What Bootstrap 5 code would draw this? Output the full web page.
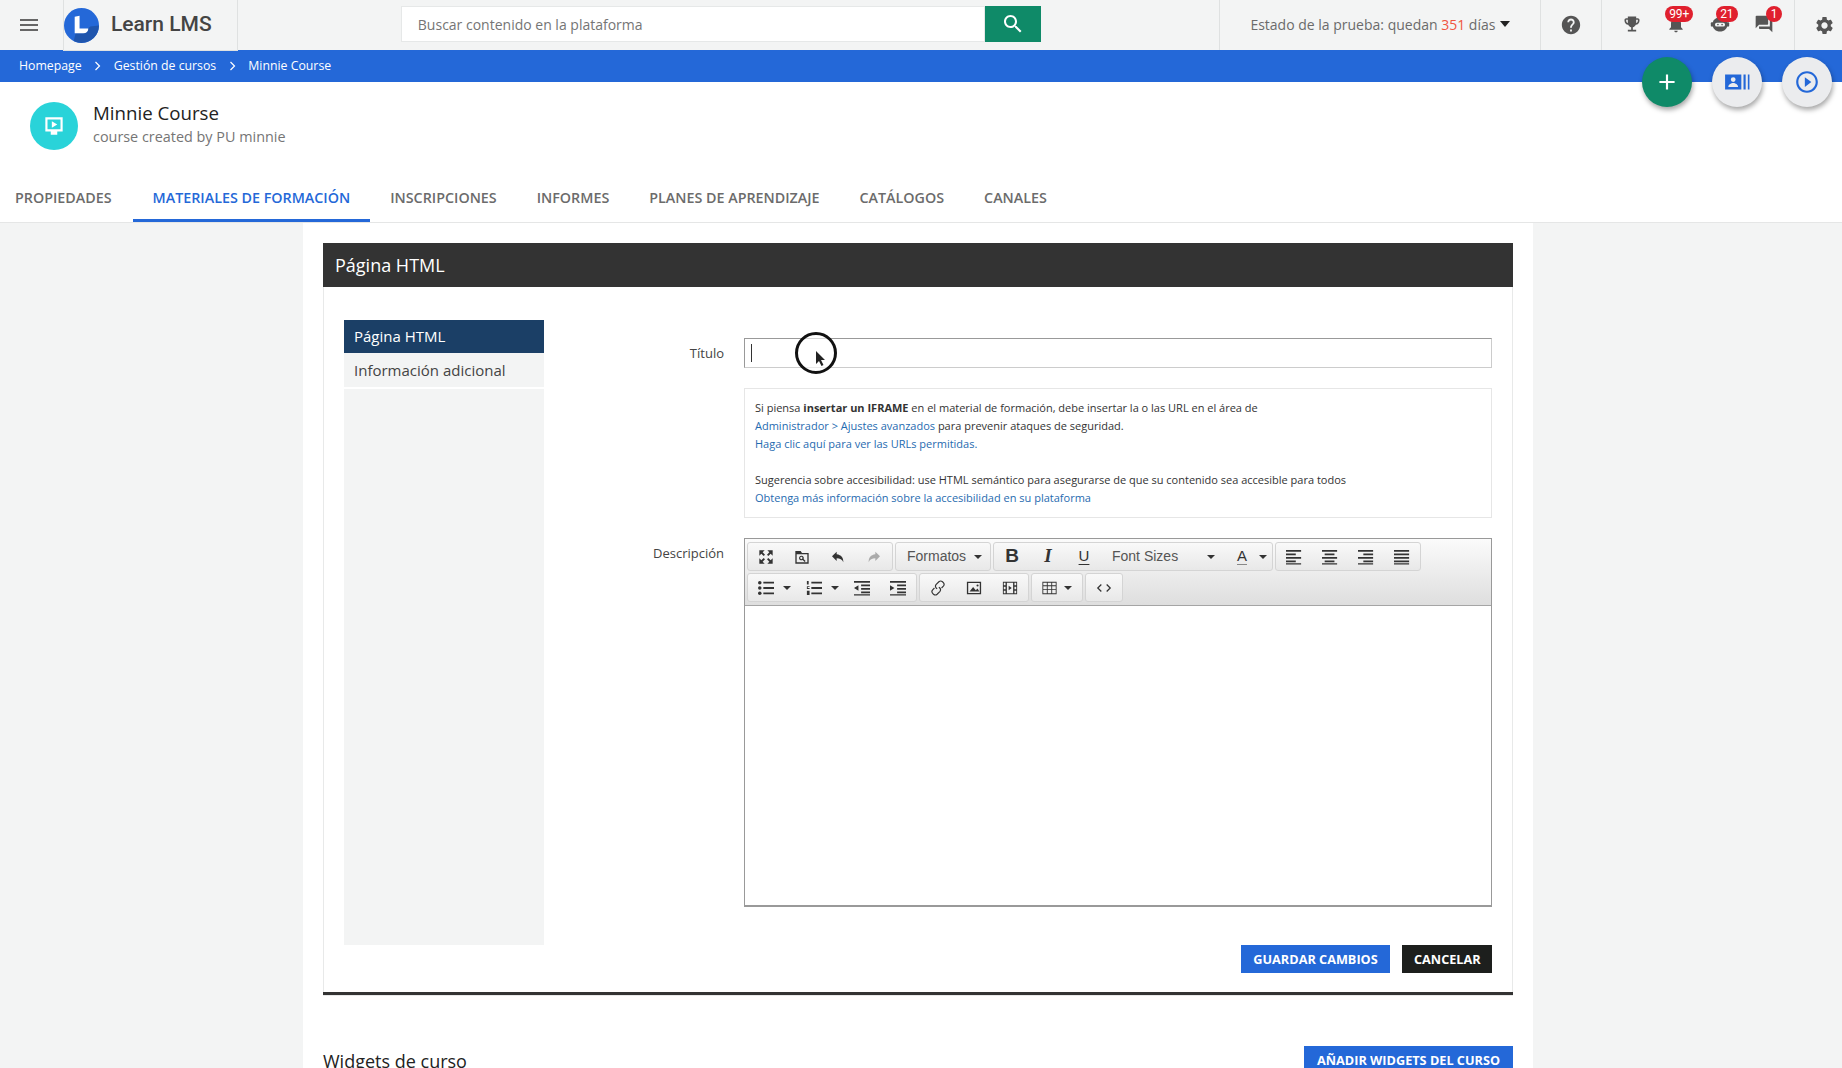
<!DOCTYPE html>
<html lang="es">
<head>
  <meta charset="UTF-8" />
  <title>Minnie Course</title>
  <link rel="stylesheet" href="https://cdn.jsdelivr.net/npm/bootstrap@5.3.2/dist/css/bootstrap.min.css" />
  <style>
    body { font-family: "Open Sans", sans-serif; color: #333; background: #fff; height: 1068px; overflow: hidden; position: relative; }
    a { text-decoration: none; }
    .topbar { height: 50px; background: #f3f4f4; }
    .menu-btn { width: 63px; padding-right: 4px; }
    .menu-btn svg { width: 24px; height: 24px; fill: #666; }
    .logo-box { width: 175px; height: 51px; background: #f3f4f4; border: 1px solid #dfe1e1; border-top: 0; position: relative; z-index: 2; font-family: "Roboto", sans-serif; font-size: 21px; font-weight: 500; color: #444; gap: 12px; }
    .search-wrap { margin-left: 163px; width: 641px; height: 36px; margin-top: -2px; }
    .search-wrap .form-control { border: 1px solid #e6e8e8; border-radius: 0; font-size: 14px; height: 36px; padding-left: 16px; }
    .search-wrap .form-control::placeholder { color: #757575; }
    .search-btn { width: 56px; height: 36px; background: #0f8a68; border-radius: 0; padding: 0; }
    .search-btn svg { width: 24px; height: 24px; fill: #fff; }
    .top-cell { height: 50px; border-left: 1px solid #dfe1e1; }
    .trial { margin-left: 178px; width: 321px; font-size: 14px; color: #6b6b6b; padding-left: 30px; padding-bottom: 2px; }
    .trial .num { color: #f0553f; }
    .caret-down { width: 0; height: 0; border-left: 5px solid transparent; border-right: 5px solid transparent; border-top: 6px solid #222; margin-left: 5px; }
    .help-cell { width: 61px; }
    .icons-cell { width: 193px; padding-left: 8px; }
    .gear-cell { width: 48px; padding-left: 19px; }
    .ico { fill: #555; width: 20px; height: 20px; }
    .help-cell .ico { width: 22px; height: 22px; }
    .gear-cell .ico { width: 21px; height: 21px; }
    .ico-wrap { position: relative; width: 44px; height: 20px; display: flex; justify-content: center; margin-top: -2px; }
    .count { position: absolute; top: -8px; left: 50%; background: #e0202e; color: #fff; font-size: 12px; line-height: 16px; height: 16px; border-radius: 8px; padding: 0 4px; text-align: center; font-family: "Roboto", sans-serif; }
    .crumbs { height: 32px; background: #2468d8; color: #fff; font-size: 12.3px; padding-left: 19px; gap: 12.5px; }
    .crumbs svg { width: 7px; height: 10px; stroke: #fff; fill: none; stroke-width: 1.2; }
    .fabs { position: absolute; top: 57px; left: 1642px; gap: 20px; z-index: 3; }
    .fab { width: 50px; height: 50px; border-radius: 50%; background: #ebecee; box-shadow: 1px 3px 5px rgba(0,0,0,.35); }
    .fab svg { width: 26px; height: 26px; fill: #2468d8; }
    .fab.green { background: #0f8a68; }
    .fab.green svg { fill: #fff; }
    .course-head { height: 108px; padding: 20px 0 0 30px; gap: 15px; }
    .course-ico { width: 48px; height: 48px; border-radius: 50%; background: #29d3d9; }
    .course-ico svg { width: 26px; height: 26px; fill: #fff; }
    .course-name { font-size: 18.7px; line-height: 25px; margin-top: -2px; margin-bottom: 1px; color: #222; }
    .course-sub { font-size: 14.4px; color: #757575; line-height: 22px; }
    .tabs { height: 32px; border-bottom: 1px solid #e5e6e6; box-sizing: content-box; }
    .tabs a { display: block; padding: 0 20px; height: 32px; font-size: 14.3px; font-weight: 600; color: #6b6b6b; line-height: 16px; }
    .tabs a:first-child { padding-left: 15px; margin-right: 1px; }
    .tabs a.active { color: #2468d8; border-bottom: 3px solid #2468d8; }
    .main { background: #f3f4f4; }
    .sheet { margin-left: 303px; width: 1230px; height: 846px; background: #fff; padding: 20px 20px 0; }
    .panel-title { height: 44px; background: #333; color: #fff; font-size: 18px; padding-left: 12px; }
    .panel { border: 1px solid #e8e9e9; border-top: 0; height: 709px; padding: 33px 20px 0; position: relative; }
    .panel::after { content: ""; position: absolute; left: -1px; right: -1px; bottom: 0; height: 3px; background: #333; }
    .side { width: 200px; height: 625px; background: #f3f4f4; flex: none; }
    .side div { height: 33px; padding-left: 10px; font-size: 15px; color: #444; }
    .side .on { background: #1b3f66; color: #fff; }
    .side .next { height: 36px; border-bottom: 2px solid #fff; }
    .form-area { width: 948px; flex: none; }
    .lab { width: 200px; padding-right: 20px; text-align: right; font-size: 13px; color: #444; flex: none; }
    .title-row { margin-top: 18px; }
    .title-row .lab { padding-top: 1px; }
    .title-input { width: 748px; height: 30px; border: 1px solid #ccc; border-top-color: #999; border-left-color: #999; position: relative; }
    .txt-caret { position: absolute; left: 6px; top: 5px; width: 1px; height: 18px; background: #333; }
    .pointer-ring { position: absolute; left: 50px; top: -7px; width: 42px; height: 42px; border: 3px solid #111; border-radius: 50%; background: rgba(255,255,255,.6); }
    .pointer-ring svg { position: absolute; left: 17px; top: 15px; width: 12px; height: 17px; }
    .info { width: 748px; height: 130px; border: 1px solid #e6e6e6; margin: 20px 0 0 200px; padding: 10px 10px 0; font-size: 11px; line-height: 18px; color: #333; }
    .info a { color: #1f6bb0; }
    .editor-row { margin-top: 20px; }
    .editor-row .lab { padding-top: 6px; }
    .editor { width: 748px; height: 369px; border: 1px solid #999; border-bottom-width: 2px; flex: none; font-family: "Liberation Sans", sans-serif; }
    .tb { height: 67px; border-bottom: 1px solid #a5a5a5; background: linear-gradient(#fbfbfb, #ededed 48%, #ececec 52%, #dedede); padding: 3px 2px 0; }
    .tb-row { height: 31px; gap: 2px; }
    .grp { height: 29px; border: 1px solid #d4d4d4; border-radius: 3px; background: linear-gradient(#f9f9f9, #e8e8e8); }
    .b { width: 36px; height: 27px; flex: none; }
    .b svg { width: 16px; height: 16px; fill: #333; }
    .b.off svg { fill: #aaa; }
    .drop { width: 48px; height: 27px; padding-left: 9px; flex: none; }
    .w { font-size: 14px; color: #555; }
    .tcaret { width: 0; height: 0; border-left: 4px solid transparent; border-right: 4px solid transparent; border-top: 4px solid #333; flex: none; }
    .actions { gap: 12px; margin-top: 38px; margin-left: 0; height: 28px; }
    .btn-save, .btn-cancel, .btn-add { border: 0; border-radius: 0; color: #fff; font-weight: 700; font-size: 12.7px; padding: 1px 12px 0; height: 28px; white-space: nowrap; }
    .btn-save { width: 149px; }
    .btn-cancel { width: 90px; background: #1d1f1d; }
    .btn-save, .btn-add { background: #2468d8; }
    .btn-add { width: 209px; }
    .widgets { margin-top: 50px; }
    .widgets h5 { font-size: 18px; line-height: 14px; font-weight: 400; color: #222; margin: 8px 0 0; }
  </style>
</head>
<body>

  <div class="topbar d-flex align-items-center">
    <div class="menu-btn d-flex justify-content-center"><svg viewBox="0 0 24 24"><path d="M3 18h18v-2H3v2zm0-5h18v-2H3v2zm0-7v2h18V6H3z"/></svg></div>
    <div class="logo-box d-flex align-items-center align-self-start">
      <svg width="35" height="35" viewBox="0 0 36 36"><circle cx="18" cy="18" r="18" fill="#2468d8"/><path d="M36 18a18 18 0 0 1-26 16L12 26h8l7-7z" fill="#1f55ad"/><path d="M11 9l5-1v13h9c0 3-2 5-5 5h-9z" fill="#fff"/></svg>
      <span>Learn LMS</span>
    </div>
    <div class="search-wrap d-flex">
      <input class="form-control" type="text" placeholder="Buscar contenido en la plataforma" />
      <button class="btn search-btn d-flex align-items-center justify-content-center flex-shrink-0"><svg viewBox="0 0 24 24"><path d="M15.5 14h-.79l-.28-.27C15.41 12.59 16 11.11 16 9.5 16 5.91 13.09 3 9.5 3S3 5.91 3 9.5 5.91 16 9.5 16c1.61 0 3.09-.59 4.23-1.57l.27.28v.79l5 4.99L20.49 19l-4.99-5zm-6 0C7.01 14 5 11.99 5 9.5S7.01 5 9.5 5 14 7.01 14 9.5 11.99 14 9.5 14z"/></svg></button>
    </div>
    <div class="top-cell trial d-flex align-items-center">Estado de la prueba: quedan&nbsp;<span class="num">351</span>&nbsp;días<span class="caret-down"></span></div>
    <div class="top-cell help-cell d-flex align-items-center justify-content-center"><svg class="ico" viewBox="0 0 24 24"><path d="M12 2C6.48 2 2 6.48 2 12s4.48 10 10 10 10-4.48 10-10S17.52 2 12 2zm1 17h-2v-2h2v2zm2.07-7.75l-.9.92C13.45 12.9 13 13.5 13 15h-2v-.5c0-1.1.45-2.1 1.17-2.83l1.24-1.26c.37-.36.59-.86.59-1.41 0-1.1-.9-2-2-2s-2 .9-2 2H8c0-2.21 1.79-4 4-4s4 1.79 4 4c0 .88-.36 1.68-.93 2.25z"/></svg></div>
    <div class="top-cell icons-cell d-flex align-items-center">
      <div class="ico-wrap"><svg class="ico" viewBox="0 0 24 24"><path d="M19 5h-2V3H7v2H5c-1.1 0-2 .9-2 2v1c0 2.55 1.92 4.63 4.39 4.94.63 1.5 1.98 2.63 3.61 2.96V19H7v2h10v-2h-4v-3.1c1.63-.33 2.98-1.46 3.61-2.96C19.08 12.63 21 10.55 21 8V7c0-1.1-.9-2-2-2zM5 8V7h2v3.82C5.84 10.4 5 9.3 5 8zm14 0c0 1.3-.84 2.4-2 2.82V7h2v1z"/></svg></div>
      <div class="ico-wrap"><svg class="ico" viewBox="0 0 24 24"><path d="M12 22c1.1 0 2-.9 2-2h-4c0 1.1.89 2 2 2zm6-6v-5c0-3.07-1.64-5.64-4.5-6.32V4c0-.83-.67-1.5-1.5-1.5s-1.5.67-1.5 1.5v.68C7.63 5.36 6 7.92 6 11v5l-2 2v1h16v-1l-2-2z"/></svg><span class="count" style="margin-left:-11px">99+</span></div>
      <div class="ico-wrap"><svg class="ico" viewBox="0 0 24 24"><path d="M12 4C7 4 3 7.500 3 12.500S7 21 12 21s9-3.500 9-8.500S17 4 12 4z"/><rect x="1" y="10" width="3" height="5" rx="1"/><rect x="20" y="10" width="3" height="5" rx="1"/><rect x="6" y="10.500" width="12" height="4.500" rx="2.200" fill="#f3f4f4"/><circle cx="9.500" cy="12.700" r="1" fill="#555"/><circle cx="14.500" cy="12.700" r="1" fill="#555"/></svg><span class="count" style="margin-left:-4px">21</span></div>
      <div class="ico-wrap"><svg class="ico" viewBox="0 0 24 24"><path d="M21 6h-2v9H6v2c0 .55.45 1 1 1h11l4 4V7c0-.55-.45-1-1-1zm-4 6V3c0-.55-.45-1-1-1H3c-.55 0-1 .45-1 1v14l4-4h10c.55 0 1-.45 1-1z"/></svg><span class="count px-0" style="margin-left:2px;width:16px">1</span></div>
    </div>
    <div class="top-cell gear-cell d-flex align-items-center"><svg class="ico" viewBox="0 0 24 24"><path d="M19.14 12.94c.04-.3.06-.61.06-.94 0-.32-.02-.64-.07-.94l2.03-1.58c.18-.14.23-.41.12-.61l-1.92-3.32c-.12-.22-.37-.29-.59-.22l-2.39.96c-.5-.38-1.03-.7-1.62-.94l-.36-2.54c-.04-.24-.24-.41-.48-.41h-3.84c-.24 0-.43.17-.47.41l-.36 2.54c-.59.24-1.13.57-1.62.94l-2.39-.96c-.22-.08-.47 0-.59.22L2.74 8.87c-.12.21-.08.47.12.61l2.03 1.58c-.05.3-.09.63-.09.94s.02.64.07.94l-2.03 1.58c-.18.14-.23.41-.12.61l1.92 3.32c.12.22.37.29.59.22l2.39-.96c.5.38 1.03.7 1.62.94l.36 2.54c.05.24.24.41.48.41h3.84c.24 0 .44-.17.47-.41l.36-2.54c.59-.24 1.13-.56 1.62-.94l2.39.96c.22.08.47 0 .59-.22l1.92-3.32c.12-.22.07-.47-.12-.61l-2.01-1.58zM12 15.6c-1.98 0-3.6-1.62-3.6-3.6s1.62-3.6 3.6-3.6 3.6 1.62 3.6 3.6-1.62 3.6-3.6 3.6z"/></svg></div>
  </div>

  <div class="crumbs d-flex align-items-center">
    <span>Homepage</span><svg viewBox="0 0 7 10"><path d="M1.500 1l4 4-4 4"/></svg>
    <span>Gestión de cursos</span><svg viewBox="0 0 7 10"><path d="M1.500 1l4 4-4 4"/></svg>
    <span>Minnie Course</span>
  </div>

  <div class="fabs d-flex">
    <div class="fab green d-flex align-items-center justify-content-center"><svg viewBox="0 0 24 24"><path d="M19 13h-6v6h-2v-6H5v-2h6V5h2v6h6v2z"/></svg></div>
    <div class="fab d-flex align-items-center justify-content-center"><svg viewBox="0 0 24 24"><path d="M1 5h15v14H1zM8.500 7.500a2.200 2.200 0 1 0 0 4.400 2.200 2.200 0 0 0 0-4.400zM4 16.500h9c0-2-2.500-3.500-4.500-3.500S4 14.500 4 16.500zM18 5h2v14h-2zM22 5h1.500v14H22z" fill-rule="evenodd"/></svg></div>
    <div class="fab d-flex align-items-center justify-content-center"><svg viewBox="0 0 24 24"><path d="M10 16.500l6-4.500-6-4.500v9zM12 2C6.480 2 2 6.480 2 12s4.480 10 10 10 10-4.480 10-10S17.520 2 12 2zm0 18c-4.410 0-8-3.590-8-8s3.590-8 8-8 8 3.590 8 8-3.590 8-8 8z"/></svg></div>
  </div>

  <div class="course-head d-flex">
    <div class="course-ico d-flex align-items-center justify-content-center"><svg viewBox="0 0 24 24"><path d="M4 4h16v13h-5v3H9v-3H4zM6 6v9h12V6zM10 7.500l5 3-5 3z" fill-rule="evenodd"/></svg></div>
    <div><div class="course-name">Minnie Course</div><div class="course-sub">course created by PU minnie</div></div>
  </div>

  <nav class="tabs d-flex">
    <a href="#">PROPIEDADES</a>
    <a href="#" class="active">MATERIALES DE FORMACIÓN</a>
    <a href="#">INSCRIPCIONES</a>
    <a href="#">INFORMES</a>
    <a href="#">PLANES DE APRENDIZAJE</a>
    <a href="#">CATÁLOGOS</a>
    <a href="#">CANALES</a>
  </nav>

  <div class="main">
    <div class="sheet">
      <div class="panel-title d-flex align-items-center">Página HTML</div>
      <div class="panel d-flex">
        <div class="side">
          <div class="on d-flex align-items-center">Página HTML</div>
          <div class="next d-flex align-items-center">Información adicional</div>
        </div>
        <div class="form-area">
          <div class="title-row d-flex align-items-center">
            <div class="lab">Título</div>
            <div class="title-input"><span class="txt-caret"></span>
              <span class="pointer-ring"><svg viewBox="0 0 12 17"><path d="M1 1v13l3-3 2.500 5 2-1-2.500-5h4z" fill="#222"/></svg></span>
            </div>
          </div>
          <div class="info">
            Si piensa <b>insertar un IFRAME</b> en el material de formación, debe insertar la o las URL en el área de<br>
            <a href="#">Administrador &gt; Ajustes avanzados</a> para prevenir ataques de seguridad.<br>
            <a href="#">Haga clic aquí para ver las URLs permitidas.</a><br><br>
            Sugerencia sobre accesibilidad: use HTML semántico para asegurarse de que su contenido sea accesible para todos<br>
            <a href="#">Obtenga más información sobre la accesibilidad en su plataforma</a>
          </div>
          <div class="editor-row d-flex">
            <div class="lab">Descripción</div>
            <div class="editor">
              <div class="tb">
                <div class="tb-row d-flex">
                  <div class="grp d-flex">
                    <div class="b d-flex align-items-center justify-content-center"><svg viewBox="0 0 24 24"><path d="M2 2h8l-3 3 3.500 3.500-2 2L5 7 2 10zM22 2v8l-3-3-3.500 3.500-2-2L17 5l-3-3zM2 22v-8l3 3 3.500-3.500 2 2L7 19l3 3zM22 22h-8l3-3-3.500-3.500 2-2L19 17l3-3z"/></svg></div>
                    <div class="b d-flex align-items-center justify-content-center"><svg viewBox="0 0 24 24"><path d="M2 6V3h8l2 3h10v16H2zM4 8h16v12H4zM11 10a3.500 3.500 0 1 0 2 6.400l3 3 1.400-1.400-3-3A3.500 3.500 0 0 0 11 10zm0 1.800a1.700 1.700 0 1 1 0 3.400 1.700 1.700 0 0 1 0-3.400z" fill-rule="evenodd"/></svg></div>
                    <div class="b d-flex align-items-center justify-content-center"><svg viewBox="0 0 24 24"><path d="M10 4L3 11l7 7v-4c5 0 8 1.500 10 6 0-7-3-11-10-12z"/></svg></div>
                    <div class="b off d-flex align-items-center justify-content-center"><svg viewBox="0 0 24 24"><path d="M14 4l7 7-7 7v-4c-5 0-8 1.500-10 6 0-7 3-11 10-12z"/></svg></div>
                  </div>
                  <div class="grp d-flex align-items-center w" style="width:96px;padding-left:11px"><span>Formatos</span><span class="tcaret ms-2"></span></div>
                  <div class="grp d-flex align-items-center">
                    <div class="b d-flex align-items-center justify-content-center"><b style="font-size:19px;color:#333">B</b></div>
                    <div class="b d-flex align-items-center justify-content-center"><i style="font-size:19px;font-family:'Liberation Serif',serif;font-weight:700;color:#333">I</i></div>
                    <div class="b d-flex align-items-center justify-content-center"><u style="font-size:15px;color:#333;text-underline-offset:3px">U</u></div>
                    <div class="d-flex align-items-center w" style="width:123px;padding:0 10px"><span class="flex-grow-1">Font Sizes</span><span class="tcaret"></span></div>
                    <div class="d-flex align-items-center" style="width:47px;padding-left:12px"><u style="font-size:15px;color:#333;text-decoration-color:#888;text-underline-offset:3px">A</u><span class="tcaret" style="margin-left:12px"></span></div>
                  </div>
                  <div class="grp d-flex">
                    <div class="b d-flex align-items-center justify-content-center"><svg viewBox="0 0 18 18"><path d="M0 1h17v2H0zM0 5h11v2H0zM0 9h17v2H0zM0 13h11v2H0zM0 16h17v1.500H0z"/></svg></div>
                    <div class="b d-flex align-items-center justify-content-center"><svg viewBox="0 0 18 18"><path d="M0 1h17v2H0zM3 5h11v2H3zM0 9h17v2H0zM3 13h11v2H3zM0 16h17v1.500H0z"/></svg></div>
                    <div class="b d-flex align-items-center justify-content-center"><svg viewBox="0 0 18 18"><path d="M0 1h17v2H0zM6 5h11v2H6zM0 9h17v2H0zM6 13h11v2H6zM0 16h17v1.500H0z"/></svg></div>
                    <div class="b d-flex align-items-center justify-content-center"><svg viewBox="0 0 18 18"><path d="M0 1h17v2H0zM0 5h17v2H0zM0 9h17v2H0zM0 13h17v2H0zM0 16h17v1.500H0z"/></svg></div>
                  </div>
                </div>
                <div class="tb-row d-flex">
                  <div class="grp d-flex align-items-center">
                    <div class="drop d-flex align-items-center"><svg width="18" height="16" viewBox="0 0 18 18" fill="#333"><circle cx="2" cy="3" r="2"/><circle cx="2" cy="9" r="2"/><circle cx="2" cy="15" r="2"/><path d="M6 2h12v2H6zM6 8h12v2H6zM6 14h12v2H6z"/></svg><span class="tcaret ms-2"></span></div>
                    <div class="drop d-flex align-items-center"><svg width="18" height="16" viewBox="0 0 18 18" fill="#333"><path d="M1 1h2v4H1zM1 7h3v1H2v1h2v1H1zM1 12h3v5H1zM6 2h12v2H6zM6 8h12v2H6zM6 14h12v2H6z"/></svg><span class="tcaret ms-2"></span></div>
                    <div class="b d-flex align-items-center justify-content-center"><svg viewBox="0 0 18 18"><path d="M0 1h18v2H0zM8 5h10v2H8zM8 9h10v2H8zM8 13h10v2H8zM0 16h18v1.500H0zM5 6v6L0 9z"/></svg></div>
                    <div class="b d-flex align-items-center justify-content-center"><svg viewBox="0 0 18 18"><path d="M0 1h18v2H0zM8 5h10v2H8zM8 9h10v2H8zM8 13h10v2H8zM0 16h18v1.500H0zM0 6v6l5-3z"/></svg></div>
                  </div>
                  <div class="grp d-flex">
                    <div class="b d-flex align-items-center justify-content-center"><svg viewBox="0 0 18 18" stroke="#333" stroke-width="1.300" style="fill:none"><path d="M8 10l-1-1a3 3 0 0 1 0-4l3-3a3 3 0 0 1 4 0l1 1a3 3 0 0 1 0 4l-2 2M10 8l1 1a3 3 0 0 1 0 4l-3 3a3 3 0 0 1-4 0l-1-1a3 3 0 0 1 0-4l2-2"/></svg></div>
                    <div class="b d-flex align-items-center justify-content-center"><svg viewBox="0 0 18 18"><path d="M1 2h16v14H1zM2.500 3.500v11h13v-11zM4 13l4-5 3 3.500 2-2 2 3.500zM13 5a1.200 1.200 0 1 0 0 2.400A1.200 1.200 0 0 0 13 5z" fill-rule="evenodd"/></svg></div>
                    <div class="b d-flex align-items-center justify-content-center"><svg viewBox="0 0 18 18"><path d="M1 2h16v14H1zM2 3v3h2V3zM2 7.500v3h2v-3zM2 12v3h2v-3zM14 3v3h2V3zM14 7.500v3h2v-3zM14 12v3h2v-3zM5.500 3v12h7V3zM7.500 6.500v5l3.500-2.500z" fill-rule="evenodd"/></svg></div>
                  </div>
                  <div class="grp d-flex align-items-center" style="width:52px;padding-left:9px"><svg width="17" height="16" viewBox="0 0 18 18" fill="#333"><path d="M1 2h16v14H1zM2 3v3h4V3zM7 3v3h4V3zM12 3v3h4V3zM2 7v3h4V7zM7 7v3h4V7zM12 7v3h4V7zM2 11v4h4v-4zM7 11v4h4v-4zM12 11v4h4v-4z" fill-rule="evenodd"/></svg><span class="tcaret" style="margin-left:6px"></span></div>
                  <div class="grp d-flex">
                    <div class="b d-flex align-items-center justify-content-center"><svg viewBox="0 0 18 18" style="fill:none" stroke="#333" stroke-width="1.400"><path d="M6 5L2 9l4 4M12 5l4 4-4 4"/></svg></div>
                  </div>
                </div>
              </div>
            </div>
          </div>
          <div class="actions d-flex justify-content-end">
            <button class="btn btn-save">GUARDAR CAMBIOS</button>
            <button class="btn btn-cancel">CANCELAR</button>
          </div>
        </div>
      </div>
      <div class="widgets d-flex justify-content-between align-items-start">
        <h5>Widgets de curso</h5>
        <button class="btn btn-add">AÑADIR WIDGETS DEL CURSO</button>
      </div>
    </div>
  </div>

</body>
</html>
